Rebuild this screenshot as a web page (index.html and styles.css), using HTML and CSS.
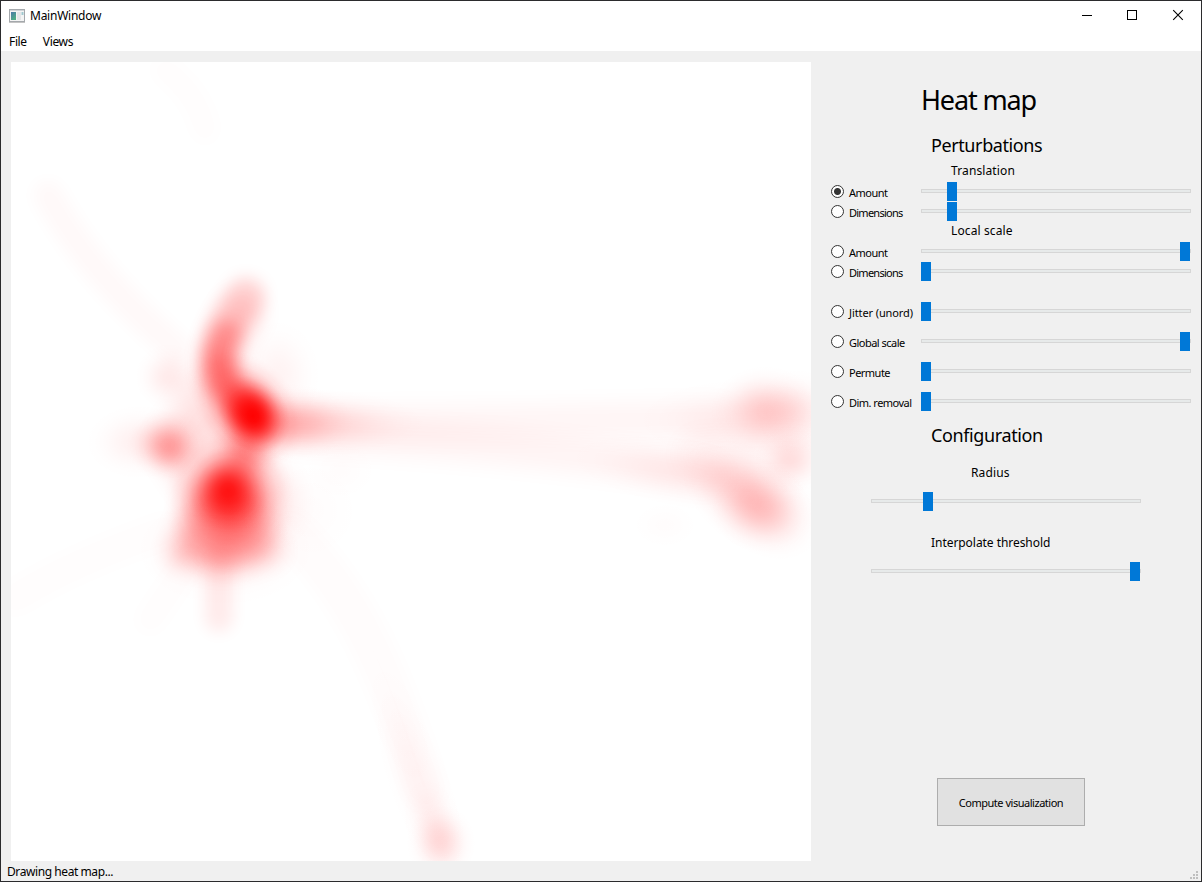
FILE: index.html
```
<!DOCTYPE html>
<html lang="en">
<head>
<meta charset="utf-8">
<title>MainWindow</title>
<link rel="stylesheet" href="styles.css">
</head>
<body>
<div class="window">
  <header class="titlebar">
    <svg class="app-icon" width="16" height="14" viewBox="0 0 16 14">
      <defs><linearGradient id="pane" x1="0" y1="0" x2="0.6" y2="1"><stop offset="0" stop-color="#4a78a8"/><stop offset="1" stop-color="#4fae84"/></linearGradient></defs>
      <rect x="0.5" y="0.5" width="15" height="12" fill="#f4f4f4" stroke="#a4a8ac"/>
      <path d="M1 1.5H15" stroke="#cfd3d6"/>
      <rect x="2" y="3" width="5" height="8" fill="url(#pane)"/>
      <rect x="8" y="3" width="4" height="8" fill="#e3e5e7"/>
      <rect x="12.500" y="3" width="2" height="3" fill="#9fc8cf"/>
      <path d="M0 13.500H16" stroke="#c4c4c4"/>
    </svg>
    <span class="caption">MainWindow</span>
    <div class="controls">
      <svg width="46" height="30" viewBox="0 0 46 30"><path d="M19 14.500H29" stroke="#000"/></svg>
      <svg width="46" height="30" viewBox="0 0 46 30"><rect x="18.500" y="9.500" width="9" height="9" fill="none" stroke="#000"/></svg>
      <svg width="46" height="30" viewBox="0 0 46 30"><path d="M18.200 9.200L27.800 18.800M27.800 9.200L18.200 18.800" stroke="#000" stroke-width="1.100"/></svg>
    </div>
  </header>
  <nav class="menubar"><span>File</span><span>Views</span></nav>
  <main class="content">
    <svg class="heatmap" width="800" height="799" viewBox="11 62 800 799">
      <defs>
        <radialGradient id="g">
          <stop offset="0" stop-color="#f00" stop-opacity="1"/>
          <stop offset="0.150" stop-color="#f00" stop-opacity="0.930"/>
          <stop offset="0.300" stop-color="#f00" stop-opacity="0.740"/>
          <stop offset="0.450" stop-color="#f00" stop-opacity="0.500"/>
          <stop offset="0.600" stop-color="#f00" stop-opacity="0.270"/>
          <stop offset="0.750" stop-color="#f00" stop-opacity="0.110"/>
          <stop offset="0.900" stop-color="#f00" stop-opacity="0.025"/>
          <stop offset="1" stop-color="#f00" stop-opacity="0"/>
        </radialGradient>
        <filter id="b8" filterUnits="userSpaceOnUse" x="-50" y="0" width="950" height="950" color-interpolation-filters="sRGB"><feGaussianBlur stdDeviation="8"/></filter>
        <filter id="b11" filterUnits="userSpaceOnUse" x="-50" y="0" width="950" height="950" color-interpolation-filters="sRGB"><feGaussianBlur stdDeviation="11"/></filter>
      </defs>
      <rect x="11" y="62" width="800" height="799" fill="#fff"/>
      <g class="trails">
        <path d="M48 195C80 255 125 305 178 350" stroke-width="30" opacity="0.022"/>
        <path d="M165 70C185 85 200 105 205 130" stroke-width="28" opacity="0.006"/>
        <path d="M15 598C60 570 110 550 165 530" stroke-width="34" opacity="0.008"/>
        <path d="M150 620L190 560" stroke-width="30" opacity="0.008"/>
        <path d="M290 530C350 590 385 660 425 790" stroke-width="42" opacity="0.010"/>
        <path d="M246 296C226 325 214 350 219 378" stroke-width="38" opacity="0.140"/>
        <path d="M226 335C216 350 212 375 245 407" stroke-width="28" opacity="0.260"/>
        <path d="M219 560V618" stroke-width="28" opacity="0.080"/>
      </g>
      <g class="trails wide">
        <path d="M242 312C216 350 212 380 250 410" stroke-width="38" opacity="0.150"/>
        <path d="M270 424C400 422 480 424 720 418" stroke-width="34" opacity="0.038"/>
        <path d="M290 432C430 440 560 450 710 475" stroke-width="34" opacity="0.044"/>
        <path d="M700 455H800" stroke-width="46" opacity="0.035"/>
      </g>
      <path class="spread" d="M195 490L258 490L280 556L225 570L168 560Z" opacity="0.270"/>
      <path class="spread" d="M200 370L250 410L278 480L260 515L190 505L150 445Z" opacity="0.110"/>
      <g fill="url(#g)">
        <ellipse cx="420" cy="785" rx="110" ry="34" opacity="0.038" transform="rotate(70 420 785)"/>
        <ellipse cx="400" cy="725" rx="80" ry="32" opacity="0.012" transform="rotate(70 400 725)"/>
        <ellipse cx="434" cy="825" rx="52" ry="32" opacity="0.045" transform="rotate(74 434 825)"/>
        <ellipse cx="300" cy="423" rx="130" ry="36" opacity="0.130"/>
        <ellipse cx="690" cy="474" rx="130" ry="38" opacity="0.055" transform="rotate(9 690 474)"/>
        <ellipse cx="740" cy="420" rx="110" ry="44" opacity="0.050"/>
        <ellipse cx="169" cy="377" rx="36" ry="36" opacity="0.080"/>
        <ellipse cx="168" cy="445" rx="42" ry="38" opacity="0.250"/>
        <ellipse cx="173" cy="451" rx="30" ry="30" opacity="0.080"/>
        <ellipse cx="140" cy="442" rx="58" ry="40" opacity="0.060"/>
        <ellipse cx="278" cy="375" rx="46" ry="60" opacity="0.045"/>
        <ellipse cx="219" cy="365" rx="32" ry="34" opacity="0.150"/>
        <ellipse cx="245" cy="452" rx="38" ry="44" opacity="0.340"/>
        <ellipse cx="248" cy="409" rx="66" ry="48" opacity="0.620" transform="rotate(48 248 409)"/>
        <ellipse cx="253" cy="416" rx="42" ry="35" opacity="0.960" transform="rotate(60 253 416)"/>
        <ellipse cx="286" cy="422" rx="70" ry="40" opacity="0.150"/>
        <ellipse cx="229" cy="502" rx="66" ry="74" opacity="0.550"/>
        <ellipse cx="228" cy="490" rx="43" ry="45" opacity="0.800"/>
        <ellipse cx="228" cy="535" rx="64" ry="54" opacity="0.100"/>
        <ellipse cx="225" cy="550" rx="95" ry="60" opacity="0.060"/>
        <ellipse cx="275" cy="500" rx="44" ry="55" opacity="0.080"/>
        <ellipse cx="340" cy="470" rx="45" ry="36" opacity="0.012"/>
        <ellipse cx="310" cy="510" rx="60" ry="60" opacity="0.012"/>
        <ellipse cx="665" cy="525" rx="40" ry="28" opacity="0.012"/>
        <ellipse cx="441" cy="843" rx="36" ry="40" opacity="0.115"/>
        <ellipse cx="765" cy="411" rx="56" ry="46" opacity="0.175"/>
        <ellipse cx="798" cy="412" rx="46" ry="46" opacity="0.075"/>
        <ellipse cx="789" cy="459" rx="36" ry="36" opacity="0.095"/>
        <ellipse cx="750" cy="499" rx="80" ry="48" opacity="0.200" transform="rotate(38 750 499)"/>
        <ellipse cx="764" cy="509" rx="56" ry="46" opacity="0.100"/>
      </g>
    </svg>
    <section class="panel">
      <h1>Heat map</h1>
      <h2 class="pert">Perturbations</h2>
      <h3>Translation</h3>
      <label class="param"><input type="radio" name="p" checked><span>Amount</span><input type="range" max="260" value="26"></label>
      <label class="param"><input type="radio" name="p"><span class="dims">Dimensions</span><input type="range" max="260" value="26"></label>
      <h3 class="local">Local scale</h3>
      <label class="param"><input type="radio" name="p"><span>Amount</span><input type="range" max="260" value="259"></label>
      <label class="param"><input type="radio" name="p"><span class="dims">Dimensions</span><input type="range" max="260" value="0"></label>
      <div class="singles">
        <label class="param"><input type="radio" name="p"><span class="jitter">Jitter (unord)</span><input type="range" max="260" value="0"></label>
        <label class="param"><input type="radio" name="p"><span>Global scale</span><input type="range" max="260" value="259"></label>
        <label class="param"><input type="radio" name="p"><span>Permute</span><input type="range" max="260" value="0"></label>
        <label class="param"><input type="radio" name="p"><span>Dim. removal</span><input type="range" max="260" value="0"></label>
      </div>
      <h2 class="conf">Configuration</h2>
      <div class="setting"><span class="radius">Radius</span><input type="range" max="260" value="52"></div>
      <div class="setting"><span class="thresh">Interpolate threshold</span><input type="range" max="260" value="259"></div>
      <button class="compute">Compute visualization</button>
    </section>
  </main>
  <footer class="statusbar"><span>Drawing heat map...</span>
    <svg width="8" height="8" viewBox="0 0 8 8" fill="#bfbfbf"><path d="M6 0h2v2H6zM3 3h2v2H3zM6 3h2v2H6zM0 6h2v2H0zM3 6h2v2H3zM6 6h2v2H6z"/></svg>
  </footer>
</div>
</body>
</html>
```
FILE: styles.css
```
* { box-sizing: border-box; margin: 0; padding: 0; }
body { width: 1202px; height: 882px; overflow: hidden; font: 12px "Noto Sans", sans-serif; color: #000; white-space: nowrap; }
.window { width: 1202px; height: 882px; border: 1px solid #2b2b2d; background: #f0f0f0; display: flex; flex-direction: column; }
.titlebar { height: 30px; background: #fff; display: flex; align-items: center; padding-left: 8px; letter-spacing: -0.25px; }
.app-icon { margin-right: 5px; }
.caption { padding-bottom: 1px; }
.controls { display: flex; margin-left: auto; }
.menubar { height: 20px; background: #fff; display: flex; align-items: center; padding-left: 8px; gap: 16px; letter-spacing: -0.35px; }
.content { height: 810px; display: grid; grid-template-columns: 800px 1fr; padding-left: 10px; }
.heatmap { display: block; margin-top: 11px; }
.trails path { fill: none; stroke: #f00; stroke-linecap: round; filter: url(#b8); }
.trails.wide path { filter: url(#b11); }
.spread { fill: #f00; filter: url(#b11); }
.panel { display: flex; flex-direction: column; padding-top: 29px; }
h1 { height: 40px; line-height: 40px; margin-left: 110px; font-size: 27px; font-weight: 400; letter-spacing: -1.15px; }
h2 { height: 30px; line-height: 30px; margin-left: 120px; font-size: 18px; font-weight: 400; letter-spacing: -0.4px; }
h3 { height: 21px; line-height: 21px; margin-left: 140px; font-size: 12px; font-weight: 400; letter-spacing: 0.12px; }
.pert { margin-top: 10px; }
.local { height: 20px; line-height: 20px; }
.param { height: 20px; display: grid; grid-template-columns: 18px 72px 270px; padding-left: 20px; font-size: 11px; line-height: 24px; letter-spacing: -0.52px; }
.dims { letter-spacing: -0.75px; }
.jitter { letter-spacing: -0.1px; }
input[type=radio] { appearance: none; width: 13px; height: 13px; margin-top: 4px; border: 1px solid #333; border-radius: 50%; background: #fff; }
input[type=radio]:checked { background: radial-gradient(circle, #333 3px, #fff 4px); }
input[type=range] { appearance: none; display: block; width: 270px; height: 20px; background: none; }
input[type=range]::-webkit-slider-runnable-track { height: 4px; background: #e7eaea; box-shadow: inset 0 0 0 1px #d6d6d6; }
input[type=range]::-webkit-slider-thumb { appearance: none; width: 10px; height: 19px; margin-top: -7px; background: #0078d7; }
.singles { display: flex; flex-direction: column; gap: 10px; margin-top: 20px; }
.conf { margin-top: 9px; letter-spacing: -0.38px; }
.setting { height: 70px; padding: 13px 0 0 60px; line-height: 20px; }
.setting span { display: block; width: max-content; margin-bottom: 8px; }
.radius { margin-left: 100px; letter-spacing: 0.15px; }
.thresh { margin-left: 60px; letter-spacing: -0.05px; }
.compute { width: 148px; height: 48px; margin: 188px 0 0 126px; background: #e1e1e1; border: 1px solid #adadad; font: 11px "Noto Sans", sans-serif; letter-spacing: -0.48px; }
.statusbar { height: 20px; display: flex; justify-content: space-between; align-items: center; padding: 0 3px 0 6px; letter-spacing: -0.42px; }
.statusbar svg { align-self: flex-end; margin-bottom: 2px; }
```
